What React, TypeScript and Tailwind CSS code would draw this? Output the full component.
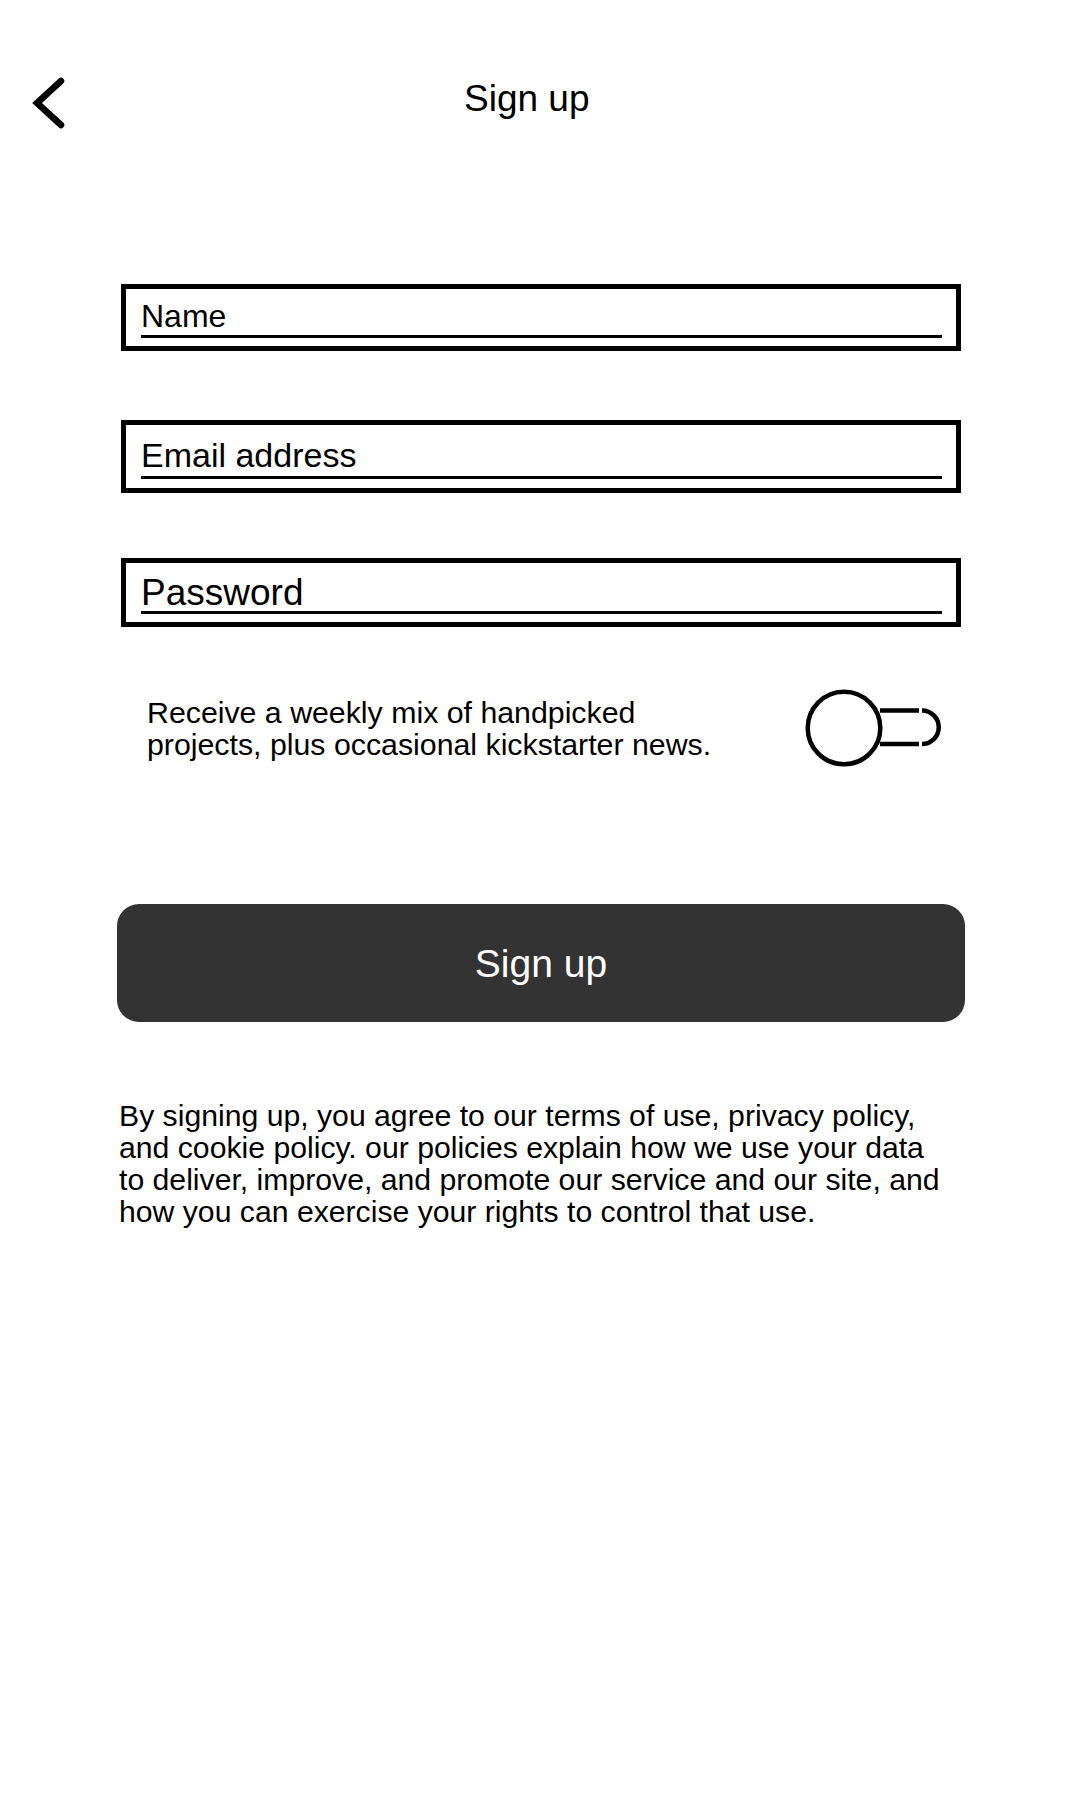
const FONT = { fontFamily: '"Liberation Sans", Arial, sans-serif' };

function BackChevron() {
  return (
    <svg width="40" height="58" viewBox="0 0 40 58" className="ml-[28px] shrink-0">
      <path
        d="M33 7 L9 29 L33 51"
        fill="none"
        stroke="#000"
        strokeWidth="6.5"
        strokeLinecap="round"
        strokeLinejoin="miter"
      />
    </svg>
  );
}

function Toggle() {
  return (
    <svg width="140" height="82" viewBox="0 0 140 82" className="ml-auto mr-[17px] shrink-0">
      <circle cx="40" cy="41" r="36.3" fill="none" stroke="#000" strokeWidth="4.5" />
      <path d="M76 23.5 H115 M76 57 H115" fill="none" stroke="#000" strokeWidth="4.5" />
      <path d="M118 23.5 A16.75 16.75 0 0 1 118 57" fill="none" stroke="#000" strokeWidth="4.5" />
    </svg>
  );
}

export default function App() {
  return (
    <div className="min-h-[1800px] w-[1080px] bg-white text-black" style={FONT}>
      <header className="flex items-start pt-[74px]">
        <BackChevron />
        <h1 className="ml-[396px] mt-[5px] text-[37px] font-normal leading-[40px]">Sign up</h1>
      </header>

      <div className="ml-[121px] mt-[152px] w-[840px] border-[5px] border-black pl-[15px] pr-[14px] pt-[11px] pb-[8px]">
        <div className="border-b-[3px] border-black pb-[3px] text-[32px] leading-[32px]">Name</div>
      </div>

      <div className="ml-[121px] mt-[69px] w-[840px] border-[5px] border-black pl-[15px] pr-[14px] pt-[13px] pb-[9px]">
        <div className="border-b-[3px] border-black pb-[4px] text-[34px] leading-[34px]">Email address</div>
      </div>

      <div className="ml-[121px] mt-[65px] w-[840px] border-[5px] border-black pl-[15px] pr-[14px] pt-[11px] pb-[8px]">
        <div className="border-b-[3px] border-black text-[37px] leading-[37px]">Password</div>
      </div>

      <div className="ml-[121px] mt-[60px] flex w-[840px] items-start">
        <p className="ml-[26px] mt-[10px] text-[30.3px] leading-[32px]">
          Receive a weekly mix of handpicked
          <br />
          projects, plus occasional kickstarter news.
        </p>
        <Toggle />
      </div>

      <button
        type="button"
        className="ml-[117px] mt-[135px] flex h-[118px] w-[848px] items-center justify-center rounded-[22px] bg-[#333333] text-[39px] leading-none text-white"
      >
        Sign up
      </button>

      <p className="ml-[119px] mt-[78px] text-[30.2px] leading-[32px]">
        By signing up, you agree to our terms of use, privacy policy,
        <br />
        and cookie policy. our policies explain how we use your data
        <br />
        to deliver, improve, and promote our service and our site, and
        <br />
        how you can exercise your rights to control that use.
      </p>
    </div>
  );
}
